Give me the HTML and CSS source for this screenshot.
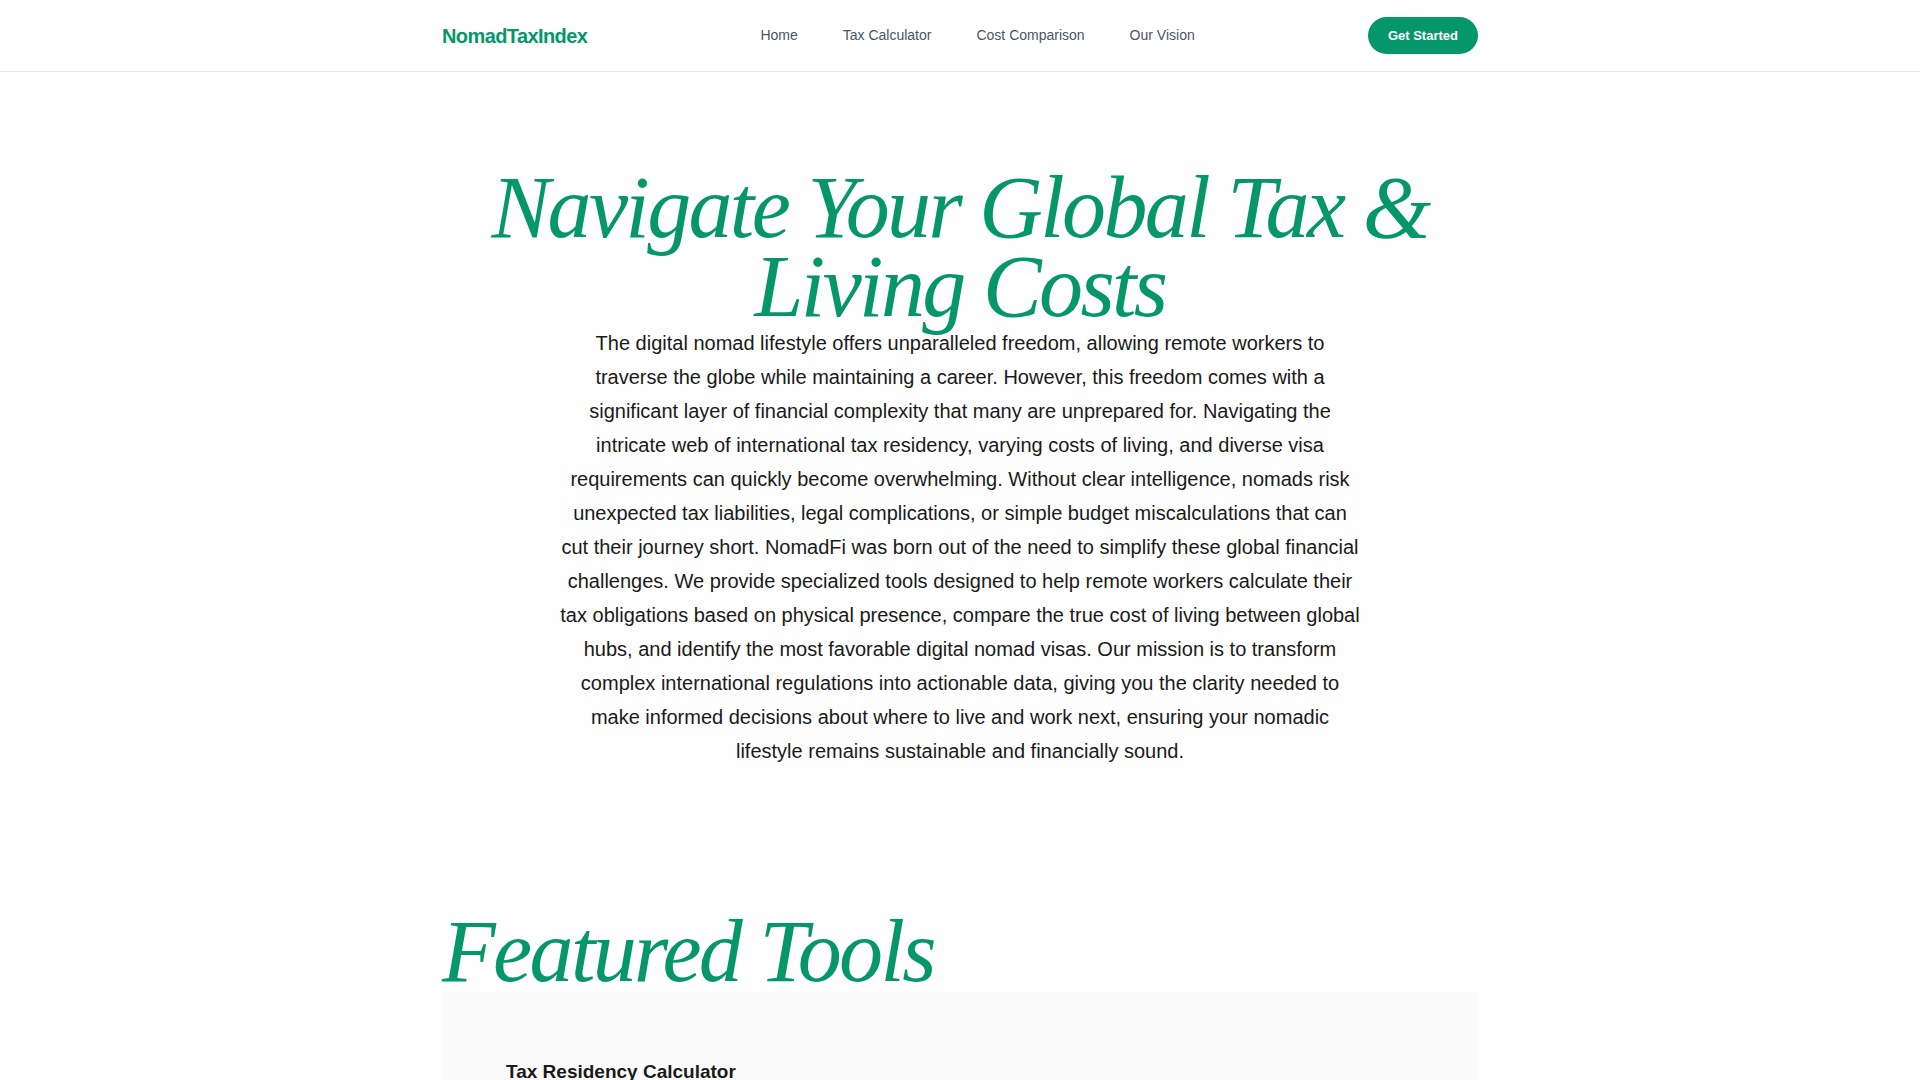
FILE: index.html
```html
<!DOCTYPE html>
<html lang="en">
<head>
<meta charset="utf-8">
<title>NomadTaxIndex</title>
<link rel="stylesheet" href="styles.css">
</head>
<body>
<header class="site-header">
  <div class="container header-inner">
    <a class="logo" href="#">NomadTaxIndex</a>
    <nav class="nav" aria-label="Main">
      <a href="#">Home</a>
      <a href="#">Tax Calculator</a>
      <a href="#">Cost Comparison</a>
      <a href="#">Our Vision</a>
    </nav>
    <button class="cta" type="button">Get Started</button>
  </div>
</header>
<main>
  <section class="container hero">
    <h1 class="display">Navigate Your Global Tax &amp; Living Costs</h1>
    <p class="intro">The digital nomad lifestyle offers unparalleled freedom, allowing remote workers to traverse the globe while maintaining a career. However, this freedom comes with a significant layer of financial complexity that many are unprepared for. Navigating the intricate web of international tax residency, varying costs of living, and diverse visa requirements can quickly become overwhelming. Without clear intelligence, nomads risk unexpected tax liabilities, legal complications, or simple budget miscalculations that can cut their journey short. NomadFi was born out of the need to simplify these global financial challenges. We provide specialized tools designed to help remote workers calculate their tax obligations based on physical presence, compare the true cost of living between global hubs, and identify the most favorable digital nomad visas. Our mission is to transform complex international regulations into actionable data, giving you the clarity needed to make informed decisions about where to live and work next, ensuring your nomadic lifestyle remains sustainable and financially sound.</p>
  </section>
  <section class="container tools">
    <h2 class="display">Featured Tools</h2>
    <article class="tool-card">
      <h3 class="tool-title">Tax Residency Calculator</h3>
    </article>
  </section>
</main>
</body>
</html>
```

FILE: styles.css
```css
* {
  box-sizing: border-box;
}

body {
  margin: 0;
  background: #fefefe;
  color: #1a1a1a;
  font-family: "Liberation Sans", Arial, sans-serif;
  line-height: 1.7;
}

.container {
  max-width: 1100px;
  margin: 0 auto;
  padding: 0 32px;
}

.site-header {
  background: #fff;
  border-bottom: 1px solid #e2e8f0;
}

.header-inner {
  display: flex;
  align-items: center;
  justify-content: space-between;
  padding-top: 17px;
  padding-bottom: 17px;
}

.logo {
  color: #059669;
  font-size: 20px;
  font-weight: 700;
  letter-spacing: -0.03em;
  text-decoration: none;
}

.nav {
  display: flex;
  gap: 45px;
}

.nav a {
  color: #475569;
  font-size: 14px;
  text-decoration: none;
}

.cta {
  border: 0;
  border-radius: 20px;
  padding: 11px 20px;
  background: #059669;
  color: #fff;
  font: 700 13px/15px "Liberation Sans", Arial, sans-serif;
}

.display {
  margin: 0;
  color: #059669;
  font: italic 400 88px/0.9 "Liberation Serif", "Times New Roman", serif;
  letter-spacing: -0.03em;
}

.hero {
  padding-top: 96px;
  padding-bottom: 80px;
  text-align: center;
}

.intro {
  max-width: 800px;
  margin: 0 auto;
  font-size: 20px;
}

.tools {
  padding-top: 64px;
}

.tool-card {
  padding: 64px;
  background: #fafafa;
}

.tool-title {
  margin: 0;
  font-size: 19px;
}
```
